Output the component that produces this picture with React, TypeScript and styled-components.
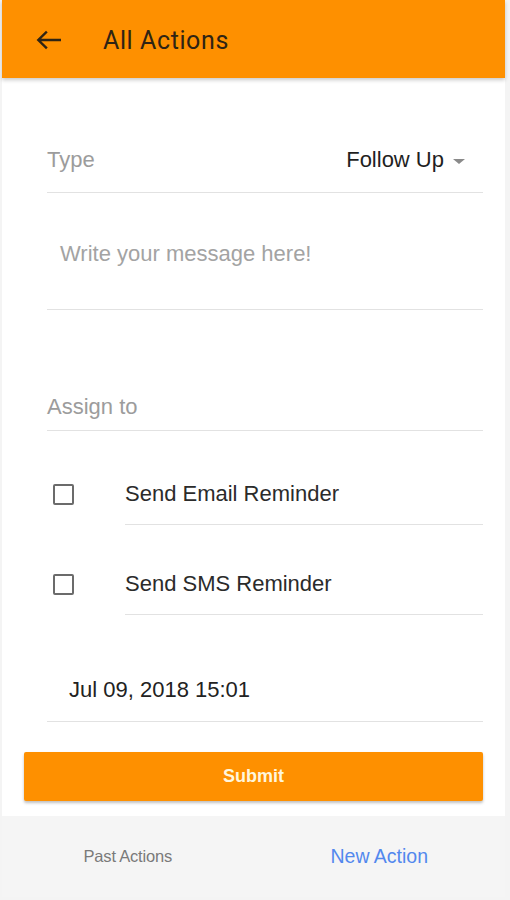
import React from "react";
import styled, { createGlobalStyle } from "styled-components";

const Global = createGlobalStyle`
  html, body { margin: 0; padding: 0; background: #f4f4f4; }
  body { font-family: "Liberation Sans", Arial, sans-serif; }
  * { box-sizing: border-box; }
`;

const Screen = styled.div`
  margin-left: 2px;
  width: 503px;
  height: 897px;
  background: #ffffff;
  display: flex;
  flex-direction: column;
`;

const Header = styled.header`
  height: 78px;
  flex: none;
  background: #fe9000;
  display: flex;
  align-items: center;
  padding-left: 33px;
  padding-top: 2px;
  box-shadow: 0 2px 4px rgba(0, 0, 0, 0.22);
  position: relative;
  z-index: 1;
`;

const BackButton = styled.button`
  border: none;
  background: none;
  padding: 0;
  width: 26px;
  height: 24px;
  display: flex;
  align-items: center;
  color: #2f2414;
`;

const Title = styled.h1`
  margin: 0 0 0 42px;
  font-family: Roboto, "Liberation Sans", sans-serif;
  font-weight: 400;
  font-size: 25px;
  letter-spacing: 0.6px;
  color: #2f2414;
`;

const Form = styled.main`
  flex: 1;
  display: flex;
  flex-direction: column;
  padding: 50px 22px 0 45px;
`;

const FieldRow = styled.div<{ $h: number; $mt?: number; $pl?: number; $pt?: number }>`
  height: ${(p) => p.$h}px;
  margin-top: ${(p) => p.$mt ?? 0}px;
  padding-left: ${(p) => p.$pl ?? 0}px;
  padding-top: ${(p) => p.$pt ?? 0}px;
  display: flex;
  align-items: center;
  justify-content: space-between;
  border-bottom: 1px solid #e2e2e2;
  font-size: 22px;
`;

const Label = styled.span`
  color: #9c9c9c;
`;

const Placeholder = styled.span`
  color: #a3a3a3;
`;

const Value = styled.span`
  color: #222222;
`;

const Select = styled.div`
  display: flex;
  align-items: center;
  gap: 9px;
  padding-right: 18px;
  color: #1f1f1f;
`;

const Caret = styled.span`
  width: 0;
  height: 0;
  border-left: 6px solid transparent;
  border-right: 6px solid transparent;
  border-top: 5px solid #8a8a8a;
  margin-top: 2px;
`;

const CheckRow = styled.div<{ $mt: number }>`
  display: flex;
  align-items: center;
  margin-top: ${(p) => p.$mt}px;
`;

const BoxCell = styled.div`
  width: 78px;
  flex: none;
  padding-left: 6px;
  display: flex;
  align-items: center;
`;

const Box = styled.span`
  width: 21px;
  height: 21px;
  border: 2.5px solid #6b6b6b;
  border-radius: 2px;
`;

const CheckLabel = styled.div`
  flex: 1;
  height: 62px;
  display: flex;
  align-items: center;
  border-bottom: 1px solid #e2e2e2;
  font-size: 22px;
  color: #2b2b2b;
`;

const SubmitButton = styled.button`
  margin: 30px 0 0 -23px;
  width: 459px;
  height: 49px;
  border: none;
  border-radius: 2px;
  background: #fe9000;
  color: #fff6dc;
  font-family: "Liberation Sans", Arial, sans-serif;
  font-weight: 700;
  font-size: 18px;
  box-shadow: 0 2px 3px rgba(0, 0, 0, 0.25);
`;

const BottomNav = styled.nav`
  margin-top: 15px;
  height: 81px;
  flex: none;
  background: #f5f5f5;
  display: grid;
  grid-template-columns: 1fr 1fr;
`;

const Tab = styled.div<{ $active?: boolean }>`
  display: flex;
  align-items: center;
  justify-content: center;
  font-size: ${(p) => (p.$active ? "19.5px" : "16.5px")};
  color: ${(p) => (p.$active ? "#5288ee" : "#7a7a7a")};
  letter-spacing: ${(p) => (p.$active ? "0" : "-0.2px")};
`;

const ArrowBack = () => (
  <svg width="26" height="20" viewBox="0 0 26 20" fill="none">
    <path
      d="M25 10H4M11 2.5L3.3 10l7.7 7.5"
      stroke="currentColor"
      strokeWidth="2.4"
      strokeLinecap="square"
    />
  </svg>
);

export default function App() {
  return (
    <>
      <Global />
      <Screen>
        <Header>
          <BackButton aria-label="Back">
            <ArrowBack />
          </BackButton>
          <Title>All Actions</Title>
        </Header>
        <Form>
          <FieldRow $h={65}>
            <Label>Type</Label>
            <Select>
              Follow Up
              <Caret />
            </Select>
          </FieldRow>
          <FieldRow $h={117} $pl={13} $pt={5}>
            <Placeholder>Write your message here!</Placeholder>
          </FieldRow>
          <FieldRow $h={48} $mt={73}>
            <Label>Assign to</Label>
          </FieldRow>
          <CheckRow $mt={32}>
            <BoxCell>
              <Box />
            </BoxCell>
            <CheckLabel>Send Email Reminder</CheckLabel>
          </CheckRow>
          <CheckRow $mt={28}>
            <BoxCell>
              <Box />
            </BoxCell>
            <CheckLabel>Send SMS Reminder</CheckLabel>
          </CheckRow>
          <FieldRow $h={64} $mt={43} $pl={22}>
            <Value>Jul 09, 2018 15:01</Value>
          </FieldRow>
          <SubmitButton>Submit</SubmitButton>
        </Form>
        <BottomNav>
          <Tab>Past Actions</Tab>
          <Tab $active>New Action</Tab>
        </BottomNav>
      </Screen>
    </>
  );
}
